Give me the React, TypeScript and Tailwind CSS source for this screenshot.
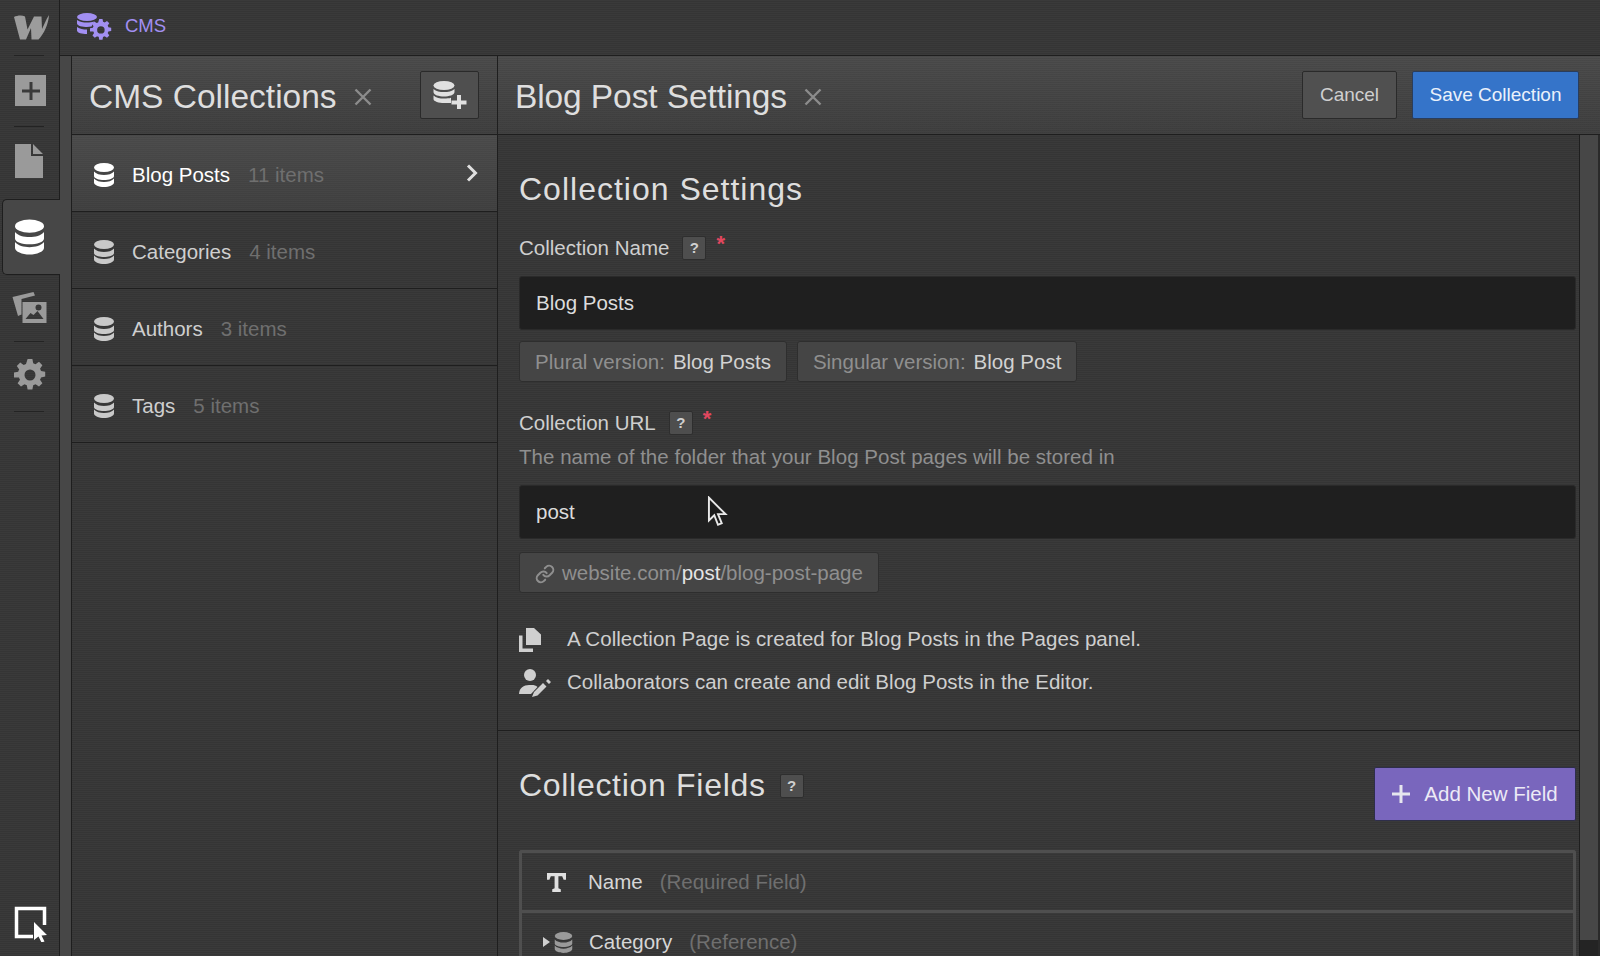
import { Link } from 'lucide-react';

// dark pinstripe used behind most of the panels
const texture = 'bg-[repeating-linear-gradient(180deg,#3a3a3a_0px,#3a3a3a_1px,#353535_1px,#353535_2px)]';
const headerTexture =
  'bg-[repeating-linear-gradient(180deg,rgba(0,0,0,0.07)_0px,rgba(0,0,0,0.07)_1px,transparent_1px,transparent_2px),linear-gradient(180deg,#4d4d4d,#414141)]';
const activeTexture =
  'bg-[repeating-linear-gradient(180deg,rgba(0,0,0,0.06)_0px,rgba(0,0,0,0.06)_1px,transparent_1px,transparent_2px),linear-gradient(180deg,#4d4d4d,#424242)]';

const collections = [
  { name: 'Blog Posts', count: '11 items', active: true },
  { name: 'Categories', count: '4 items' },
  { name: 'Authors', count: '3 items' },
  { name: 'Tags', count: '5 items' },
];

const DbIcon = ({ className }: { className: string }) => (
  <svg viewBox="0 0 20 24" className={className} fill="currentColor">
    <ellipse cx="10" cy="4.5" rx="10" ry="4.5" />
    <path d="M0 8.5C2 11 6 12 10 12S18 11 20 8.5V13C20 15.5 15 17 10 17S0 15.5 0 13Z" />
    <path d="M0 15.5C2 18 6 19 10 19S18 18 20 15.5V19.5C20 22 15 24 10 24S0 22 0 19.5Z" />
  </svg>
);

const GearPath = () => (
  <path
    fillRule="evenodd"
    d="M13.6 0h4.8l.8 4.2c.8.2 1.6.6 2.3 1l3.5-2.4 3.4 3.4-2.4 3.5c.4.7.8 1.5 1 2.3l4.2.8v4.8l-4.2.8c-.2.8-.6 1.6-1 2.3l2.4 3.5-3.4 3.4-3.5-2.4c-.7.4-1.5.8-2.3 1l-.8 4.2h-4.8l-.8-4.2c-.8-.2-1.6-.6-2.3-1l-3.5 2.4-3.4-3.4 2.4-3.5c-.4-.7-.8-1.5-1-2.3L0 18.400v-4.800l4.200-.8c.2-.8.6-1.600 1-2.300L2.800 7 6.200 3.600l3.500 2.400c.7-.4 1.500-.8 2.300-1ZM16 10.500a5.500 5.500 0 1 0 0 11 5.500 5.500 0 0 0 0-11Z"
  />
);

const CloseIcon = ({ className }: { className: string }) => (
  <svg viewBox="0 0 18 18" className={className} fill="none" stroke="#8c8c8c" strokeWidth="2.4">
    <path d="M1.500 1.500l15 15M16.500 1.500l-15 15" />
  </svg>
);

const Help = () => (
  <span className="flex h-[24px] w-[24px] items-center justify-center rounded-[2px] border border-[#2e2e2e] bg-[#4e4e4e] text-[15px] font-bold text-[#d0d0d0]">
    ?
  </span>
);

const Required = () => <span className="mb-[9px] ml-[10px] text-[22px] leading-none font-bold text-[#e2475f]">*</span>;

const Divider = ({ className }: { className: string }) => (
  <div className={`mx-[14px] h-px w-[30px] bg-[#232323] ${className}`} />
);

const Rail = () => (
  <aside className={`flex w-[60px] shrink-0 flex-col border-r border-[#1e1e1e] ${texture}`}>
    <div className="flex h-[55px] shrink-0 items-center pb-[2px] pl-[14px]">
      <svg viewBox="0 0 35 26" className="h-[26px] w-[35px]" fill="#9c9c9c">
        <path d="M0 3C3 1.500 8 1 11 2.500L13.500 15.500 20 2.500H27.500L28 15C30 11 32 5.500 35 1 34.500 10 30 20 24.500 25.500H17.500L17 14 12 25.500H6Z" />
      </svg>
    </div>
    <Divider className="" />
    <div className="mt-[19px] ml-[15px] flex h-[31px] w-[31px] items-center justify-center bg-[#9a9a9a]">
      <svg viewBox="0 0 18 18" className="h-[18px] w-[18px]" fill="#3a3a3a">
        <path d="M7.500 0h3v7.500H18v3h-7.500V18h-3v-7.500H0v-3h7.500Z" />
      </svg>
    </div>
    <Divider className="mt-[20px]" />
    <svg viewBox="0 0 28 34" className="mt-[17px] ml-[15px] h-[34px] w-[28px]" fill="#9a9a9a">
      <path d="M0 0h16v12h12v22H0ZM18 0l10 10H18Z" />
    </svg>
    <div className="relative z-10 mt-[21px] ml-[2px] -mr-px flex h-[76px] shrink-0 items-center rounded-l-[5px] border-y border-l border-[#1e1e1e] bg-[#474747] pl-[12px]">
      <DbIcon className="h-[36px] w-[29px] text-white" />
    </div>
    <svg viewBox="0 0 34 31" className="mt-[17px] ml-[12px] h-[31px] w-[35px]" fill="#9a9a9a">
      <path d="M0 5L21 0l1.500 3.500L9 7v15.500l-3.500 1.500Z" />
      <path fillRule="evenodd" d="M10 10h24v21H10ZM13 27h18l-6-8-4 4-3-2ZM26 12.500a3 3 0 1 0 0 6 3 3 0 0 0 0-6Z" />
    </svg>
    <Divider className="mt-[18px]" />
    <svg viewBox="0 0 32 32" className="mt-[17px] ml-[14px] h-[32px] w-[32px]" fill="#9a9a9a">
      <GearPath />
    </svg>
    <Divider className="mt-[20px]" />
    <svg viewBox="0 0 34 36" className="mt-auto mb-[14px] ml-[14px] h-[36px] w-[34px]">
      <path d="M19 30.500H2.500V2.500h28V19" fill="none" stroke="#fff" strokeWidth="3.500" />
      <path d="M20 16l13 13-5.500.5 3 6-3 1-3-6L20 34Z" fill="#fff" />
    </svg>
  </aside>
);

const CollectionsPanel = () => (
  <section className="flex w-[427px] shrink-0 flex-col border-x border-[#1e1e1e]">
    <header className={`flex h-[79px] shrink-0 items-center border-b border-[#1e1e1e] pr-[18px] pl-[17px] ${headerTexture}`}>
      <h1 className="pt-[4px] text-[33.500px] leading-none text-[#dedede]">CMS Collections</h1>
      <CloseIcon className="mt-[3px] ml-[17px] h-[18px] w-[18px]" />
      <button className="ml-auto flex h-[48px] w-[59px] items-center justify-center rounded-[2px] border border-[#2a2a2a] bg-[#4f4f4f]">
        <svg viewBox="0 0 34 28" className="h-[28px] w-[34px]" fill="#e0e0e0">
          <ellipse cx="11" cy="4.500" rx="10.500" ry="4.500" />
          <path d="M.5 8C3 10.500 7 11 11 11S19 10.500 21.500 8V11C21.500 14 16 15.500 11 15.500S.5 14 .5 11Z" />
          <path d="M.5 14.500C3 17 7 17.500 11 17.500c3 0 5-.2 7-.8V22H11C6 22 .5 20.500.5 18Z" />
          <path d="M24 14h4v5.500h5.500v4H28V29h-4v-5.500h-5.500v-4H24Z" />
        </svg>
      </button>
    </header>
    <ul className={`flex-1 ${texture}`}>
      {collections.map((c) => (
        <li
          key={c.name}
          className={`flex h-[77px] items-center border-b border-[#1e1e1e] pt-[3px] pr-[19px] pl-[22px] ${c.active ? activeTexture : ''}`}
        >
          <DbIcon className={`h-[24px] w-[20px] ${c.active ? 'text-white' : 'text-[#c9c9c9]'}`} />
          <span className={`mt-[1px] ml-[18px] text-[20.500px] ${c.active ? 'text-white' : 'text-[#cfcfcf]'}`}>{c.name}</span>
          <span className="mt-[1px] ml-[18px] text-[20.500px] text-[#6f6f6f]">{c.count}</span>
          {c.active && (
            <svg viewBox="0 0 12 18" className="mb-[4px] ml-auto h-[18px] w-[12px]" fill="none" stroke="#e0e0e0" strokeWidth="3">
              <path d="M2 1.500L9.500 9 2 16.500" />
            </svg>
          )}
        </li>
      ))}
    </ul>
  </section>
);

const Chip = ({ label, value }: { label: string; value: string }) => (
  <span className="flex h-[41px] items-center rounded-[3px] border border-[#2e2e2e] bg-[#454545] px-[15px] pt-[2px] text-[20.500px]">
    <span className="text-[#8f8f8f]">{label}</span>
    <span className="ml-[8px] text-[#d2d2d2]">{value}</span>
  </span>
);

const TextInput = ({ value, children }: { value: string; children?: React.ReactNode }) => (
  <div className="relative flex h-[54px] items-center rounded-[3px] border border-[#2a2a2a] bg-[#1f1f1f] pl-[16px] text-[20.500px] text-[#dcdcdc]">
    {value}
    {children}
  </div>
);

const SettingsPanel = () => (
  <section className="flex min-w-0 flex-1 flex-col">
    <header className={`flex h-[79px] shrink-0 items-center border-b border-[#1e1e1e] pr-[21px] pl-[17px] ${headerTexture}`}>
      <h1 className="pt-[4px] text-[33.500px] leading-none tracking-[-0.100px] text-[#dedede]">Blog Post Settings</h1>
      <CloseIcon className="mt-[3px] ml-[17px] h-[18px] w-[18px]" />
      <button className="ml-auto flex h-[48px] w-[95px] items-center justify-center rounded-[2px] border border-[#2a2a2a] bg-[#505050] text-[19px] text-[#cfcfcf]">
        Cancel
      </button>
      <button className="ml-[15px] flex h-[48px] w-[167px] items-center justify-center rounded-[2px] border border-[#2a3d5c] bg-[#3574c9] text-[19px] text-[#eaf1fb]">
        Save Collection
      </button>
    </header>
    <div className="flex min-h-0 flex-1">
      <div className={`flex min-w-0 flex-1 flex-col overflow-hidden border-r border-[#1e1e1e] ${texture}`}>
        <div className="h-[596px] shrink-0 border-b border-[#1e1e1e] pr-[3px] pl-[21px]">
          <h2 className="mt-[36px] text-[32px] leading-[36px] tracking-[1px] text-[#dedede]">Collection Settings</h2>
          <div className="mt-[29px] flex h-[24px] items-center text-[20.500px] text-[#cfcfcf]">
            Collection Name
            <span className="ml-[13px]">
              <Help />
            </span>
            <Required />
          </div>
          <div className="mt-[16px]">
            <TextInput value="Blog Posts" />
          </div>
          <div className="mt-[11px] flex gap-[10px]">
            <Chip label="Plural version:" value="Blog Posts" />
            <Chip label="Singular version:" value="Blog Post" />
          </div>
          <div className="mt-[29px] flex h-[24px] items-center text-[20.500px] text-[#cfcfcf]">
            Collection URL
            <span className="ml-[13px]">
              <Help />
            </span>
            <Required />
          </div>
          <p className="mt-[10px] text-[20.500px] leading-[24px] tracking-[0.030px] text-[#8f8f8f]">
            The name of the folder that your Blog Post pages will be stored in
          </p>
          <div className="mt-[16px]">
            <TextInput value="post">
              <svg viewBox="0 0 20 30" className="absolute top-[10px] left-[187px] h-[32px] w-[22px]">
                <path d="M1.500 1.500V23l5-5 3.500 9 3.500-1.500-3.500-8.500H17Z" fill="#1c1c1c" stroke="#e8e8e8" strokeWidth="1.800" />
              </svg>
            </TextInput>
          </div>
          <div className="mt-[13px] inline-flex h-[41px] items-center rounded-[3px] border border-[#2e2e2e] bg-[#454545] px-[15px] pt-[2px] text-[20.500px] text-[#8f8f8f]">
            <Link className="mr-[7px] h-[20px] w-[20px] text-[#8f8f8f]" strokeWidth={2.4} />
            website.com/<span className="text-[#e4e4e4]">post</span>/blog-post-page
          </div>
          <div className="mt-[25px] flex h-[43px] items-center text-[20.500px] tracking-[0.050px] text-[#cfcfcf]">
            <svg viewBox="0 0 22 24" className="mr-[26px] h-[24px] w-[22px]" fill="#cfcfcf">
              <path d="M7 0h8l7 6.500V17H7Z" />
              <path d="M0 7.500h3.500V20.500H14V24H0Z" />
            </svg>
            A Collection Page is created for Blog Posts in the Pages panel.
          </div>
          <div className="flex h-[43px] items-center text-[20.500px] tracking-[0.020px] text-[#cfcfcf]">
            <svg viewBox="0 0 32 28" className="mr-[16px] h-[28px] w-[32px]" fill="#cfcfcf">
              <circle cx="11" cy="6" r="6" />
              <path d="M0 25c0-6 5-9 10-9h3c2 0 4 .5 5.500 2L12 25Z" />
              <path d="M13 28l2-5 9-9 3.500 3.500-9 9ZM27 12l2-2 3 3-2 2Z" />
            </svg>
            Collaborators can create and edit Blog Posts in the Editor.
          </div>
        </div>
        <div className="pr-[3px] pl-[21px]">
          <div className="mt-[36px] flex items-start justify-between">
            <div className="flex items-center">
              <h2 className="text-[32px] leading-[36px] tracking-[0.700px] text-[#dedede]">Collection Fields</h2>
              <span className="mt-[2px] ml-[14px]">
                <Help />
              </span>
            </div>
            <button className="flex h-[54px] w-[202px] items-center justify-center rounded-[2px] border border-[#2e2e4a] bg-[#7966bd] text-[20.500px] text-[#eceaf6]">
              <svg viewBox="0 0 18 18" className="mr-[14px] h-[18px] w-[18px]" fill="#e6e6ee">
                <path d="M7.500 0h3v7.500H18v3h-7.500V18h-3v-7.500H0v-3h7.500Z" />
              </svg>
              Add New Field
            </button>
          </div>
          <div className="mt-[29px] rounded-t-[3px] border-x-[3px] border-t-[3px] border-[#4f4f4f]">
            <div className="flex h-[60px] items-center border-b-[3px] border-[#4f4f4f] pt-[1px] pl-[25px] text-[20.500px]">
              <svg viewBox="0 0 20 20" className="mr-[22px] h-[19px] w-[19px]" fill="#e0e0e0">
                <path d="M0 0h20v7h-2.500L16 3.500h-4V16l2.500 1v3h-9v-3L8 16V3.500H4L2.500 7H0Z" />
              </svg>
              <span className="text-[#d6d6d6]">Name</span>
              <span className="ml-[17px] text-[#6f6f6f]">(Required Field)</span>
            </div>
            <div className="flex h-[58px] items-center pl-[21px] text-[20.500px]">
              <svg viewBox="0 0 7 10" className="mr-[3px] h-[10px] w-[7px]" fill="#d0d0d0">
                <path d="M0 0l7 5-7 5Z" />
              </svg>
              <DbIcon className="mr-[15px] h-[21px] w-[21px] text-[#9a9a9a]" />
              <span className="text-[#d6d6d6]">Category</span>
              <span className="ml-[17px] text-[#6f6f6f]">(Reference)</span>
            </div>
          </div>
        </div>
      </div>
      <div className="flex w-[20px] shrink-0 flex-col border-r-2 border-[#2a2a2a]">
        <div className="flex-1 bg-[#474747]" />
        <div className="h-[16px] bg-[#242424]" />
      </div>
    </div>
  </section>
);

export default function App() {
  return (
    <div className="flex h-screen w-full overflow-hidden bg-[#383838] [font-family:'Liberation_Sans',Arial,sans-serif]">
      <Rail />
      <div className="flex min-w-0 flex-1 flex-col">
        <div className={`flex h-[56px] shrink-0 items-center border-b border-[#1e1e1e] pb-[3px] pl-[17px] ${texture}`}>
          <svg viewBox="0 0 35 27" className="h-[27px] w-[35px]" fill="#a28ff2">
            <ellipse cx="10" cy="4" rx="10" ry="4" />
            <path d="M0 7c3 2 6 2.500 10 2.500 2.500 0 5-.3 7-1l-2.500 5c-1.500.3-3 .5-4.500.5-4 0-10-1-10-3.500ZM0 14c3 2 6 2.500 10 2.500v4.500C5 21 0 20 0 17.500Z" />
            <g transform="translate(13 6) scale(.68)">
              <GearPath />
            </g>
          </svg>
          <span className="ml-[13px] text-[18.500px] text-[#a28ff2]">CMS</span>
        </div>
        <div className="flex min-h-0 flex-1">
          <div className="w-[11px] shrink-0 bg-[#474747]" />
          <CollectionsPanel />
          <SettingsPanel />
        </div>
      </div>
    </div>
  );
}
